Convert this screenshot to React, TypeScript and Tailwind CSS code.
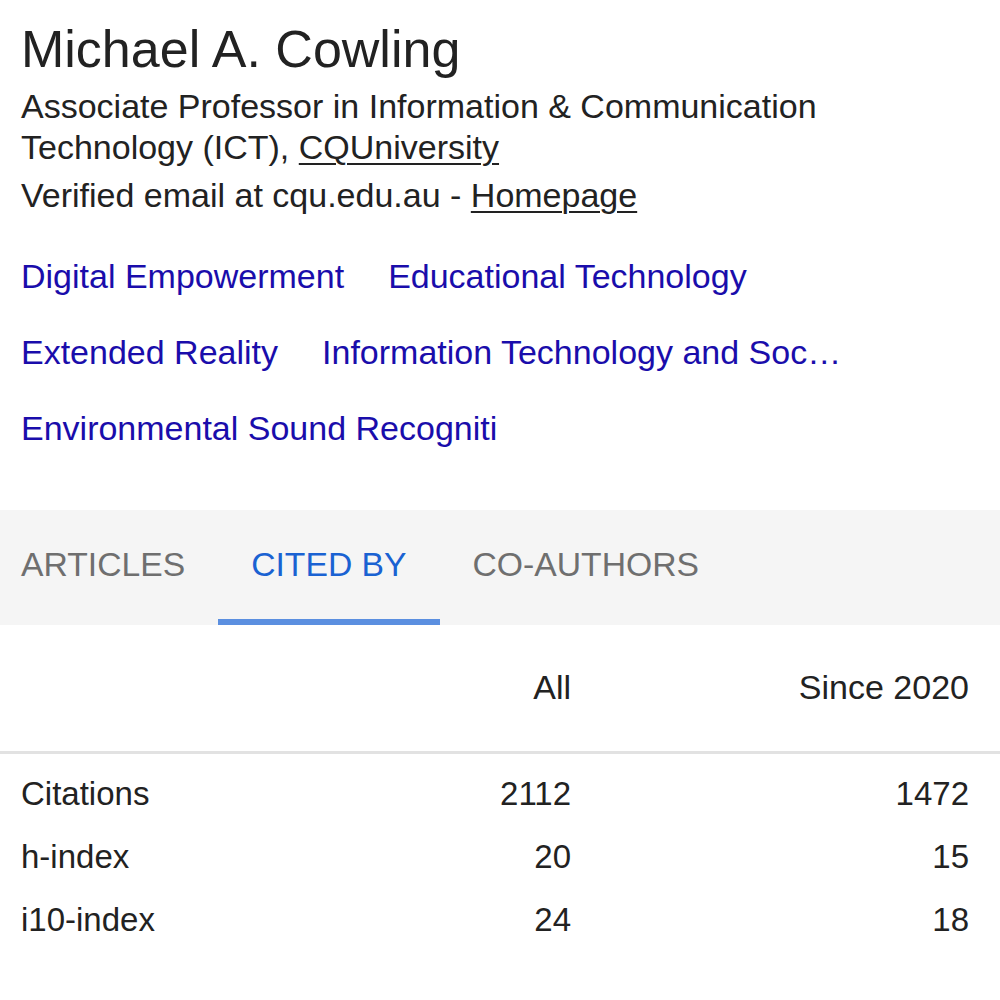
const interests = [
  ['Digital Empowerment', 'Educational Technology'],
  ['Extended Reality', 'Information Technology and Soc…'],
  ['Environmental Sound Recogniti'],
];

const stats = [
  { label: 'Citations', all: '2112', since: '1472' },
  { label: 'h-index', all: '20', since: '15' },
  { label: 'i10-index', all: '24', since: '18' },
];

const tabs = ['ARTICLES', 'CITED BY', 'CO-AUTHORS'];

export default function App() {
  return (
    <div className="w-[1000px] min-h-[1000px] bg-white text-[#222] font-['Liberation_Sans',Arial,sans-serif]">
      {/* Profile header */}
      <div className="px-[21px] pt-[18px]">
        <h1 className="text-[52px] leading-[62px] font-normal">Michael A. Cowling</h1>
        <p className="mt-[6px] text-[34px] leading-[41px]">
          Associate Professor in Information &amp; Communication Technology (ICT),{' '}
          <a className="underline underline-offset-[4px] decoration-[2px]">CQUniversity</a>
        </p>
        <p className="mt-[7px] text-[34px] leading-[41px]">
          Verified email at cqu.edu.au - <a className="underline underline-offset-[4px] decoration-[2px]">Homepage</a>
        </p>

        {/* Interests */}
        <div className="mt-[22px]">
          {interests.map((row, i) => (
            <div key={i} className="flex gap-[44px] text-[34px] leading-[76px] text-[#1a0dab] whitespace-nowrap">
              {row.map((t) => (
                <a key={t}>{t}</a>
              ))}
            </div>
          ))}
        </div>
      </div>

      {/* Tabs */}
      <div className="mt-[44px] h-[115px] bg-[#f5f5f5] flex">
        {tabs.map((t, i) => {
          const active = t === 'CITED BY';
          return (
            <div
              key={t}
              className={`h-[115px] pt-[34px] text-[33.7px] leading-[40px] border-b-[6px] ${
                i === 0 ? 'pl-[21px] pr-[33px]' : 'px-[33px]'
              } ${active ? 'text-[#1a62d2] border-[#5b8fe0]' : 'text-[#6f6f6f] border-transparent'}`}
            >
              {t}
            </div>
          );
        })}
      </div>

      {/* Citation table */}
      <div className="h-[129px] pt-[42px] flex pl-[21px] pr-[31px] text-[34px] leading-[40px] border-b-[3px] border-[#e2e2e2]">
        <div className="flex-1" />
        <div className="w-[200px] text-right">All</div>
        <div className="w-[398px] text-right">Since 2020</div>
      </div>
      <div className="pt-[8px]">
        {stats.map((s) => (
          <div key={s.label} className="flex pl-[21px] pr-[31px] text-[33px] leading-[63px]">
            <div className="flex-1">{s.label}</div>
            <div className="w-[200px] text-right">{s.all}</div>
            <div className="w-[398px] text-right">{s.since}</div>
          </div>
        ))}
      </div>
    </div>
  );
}
